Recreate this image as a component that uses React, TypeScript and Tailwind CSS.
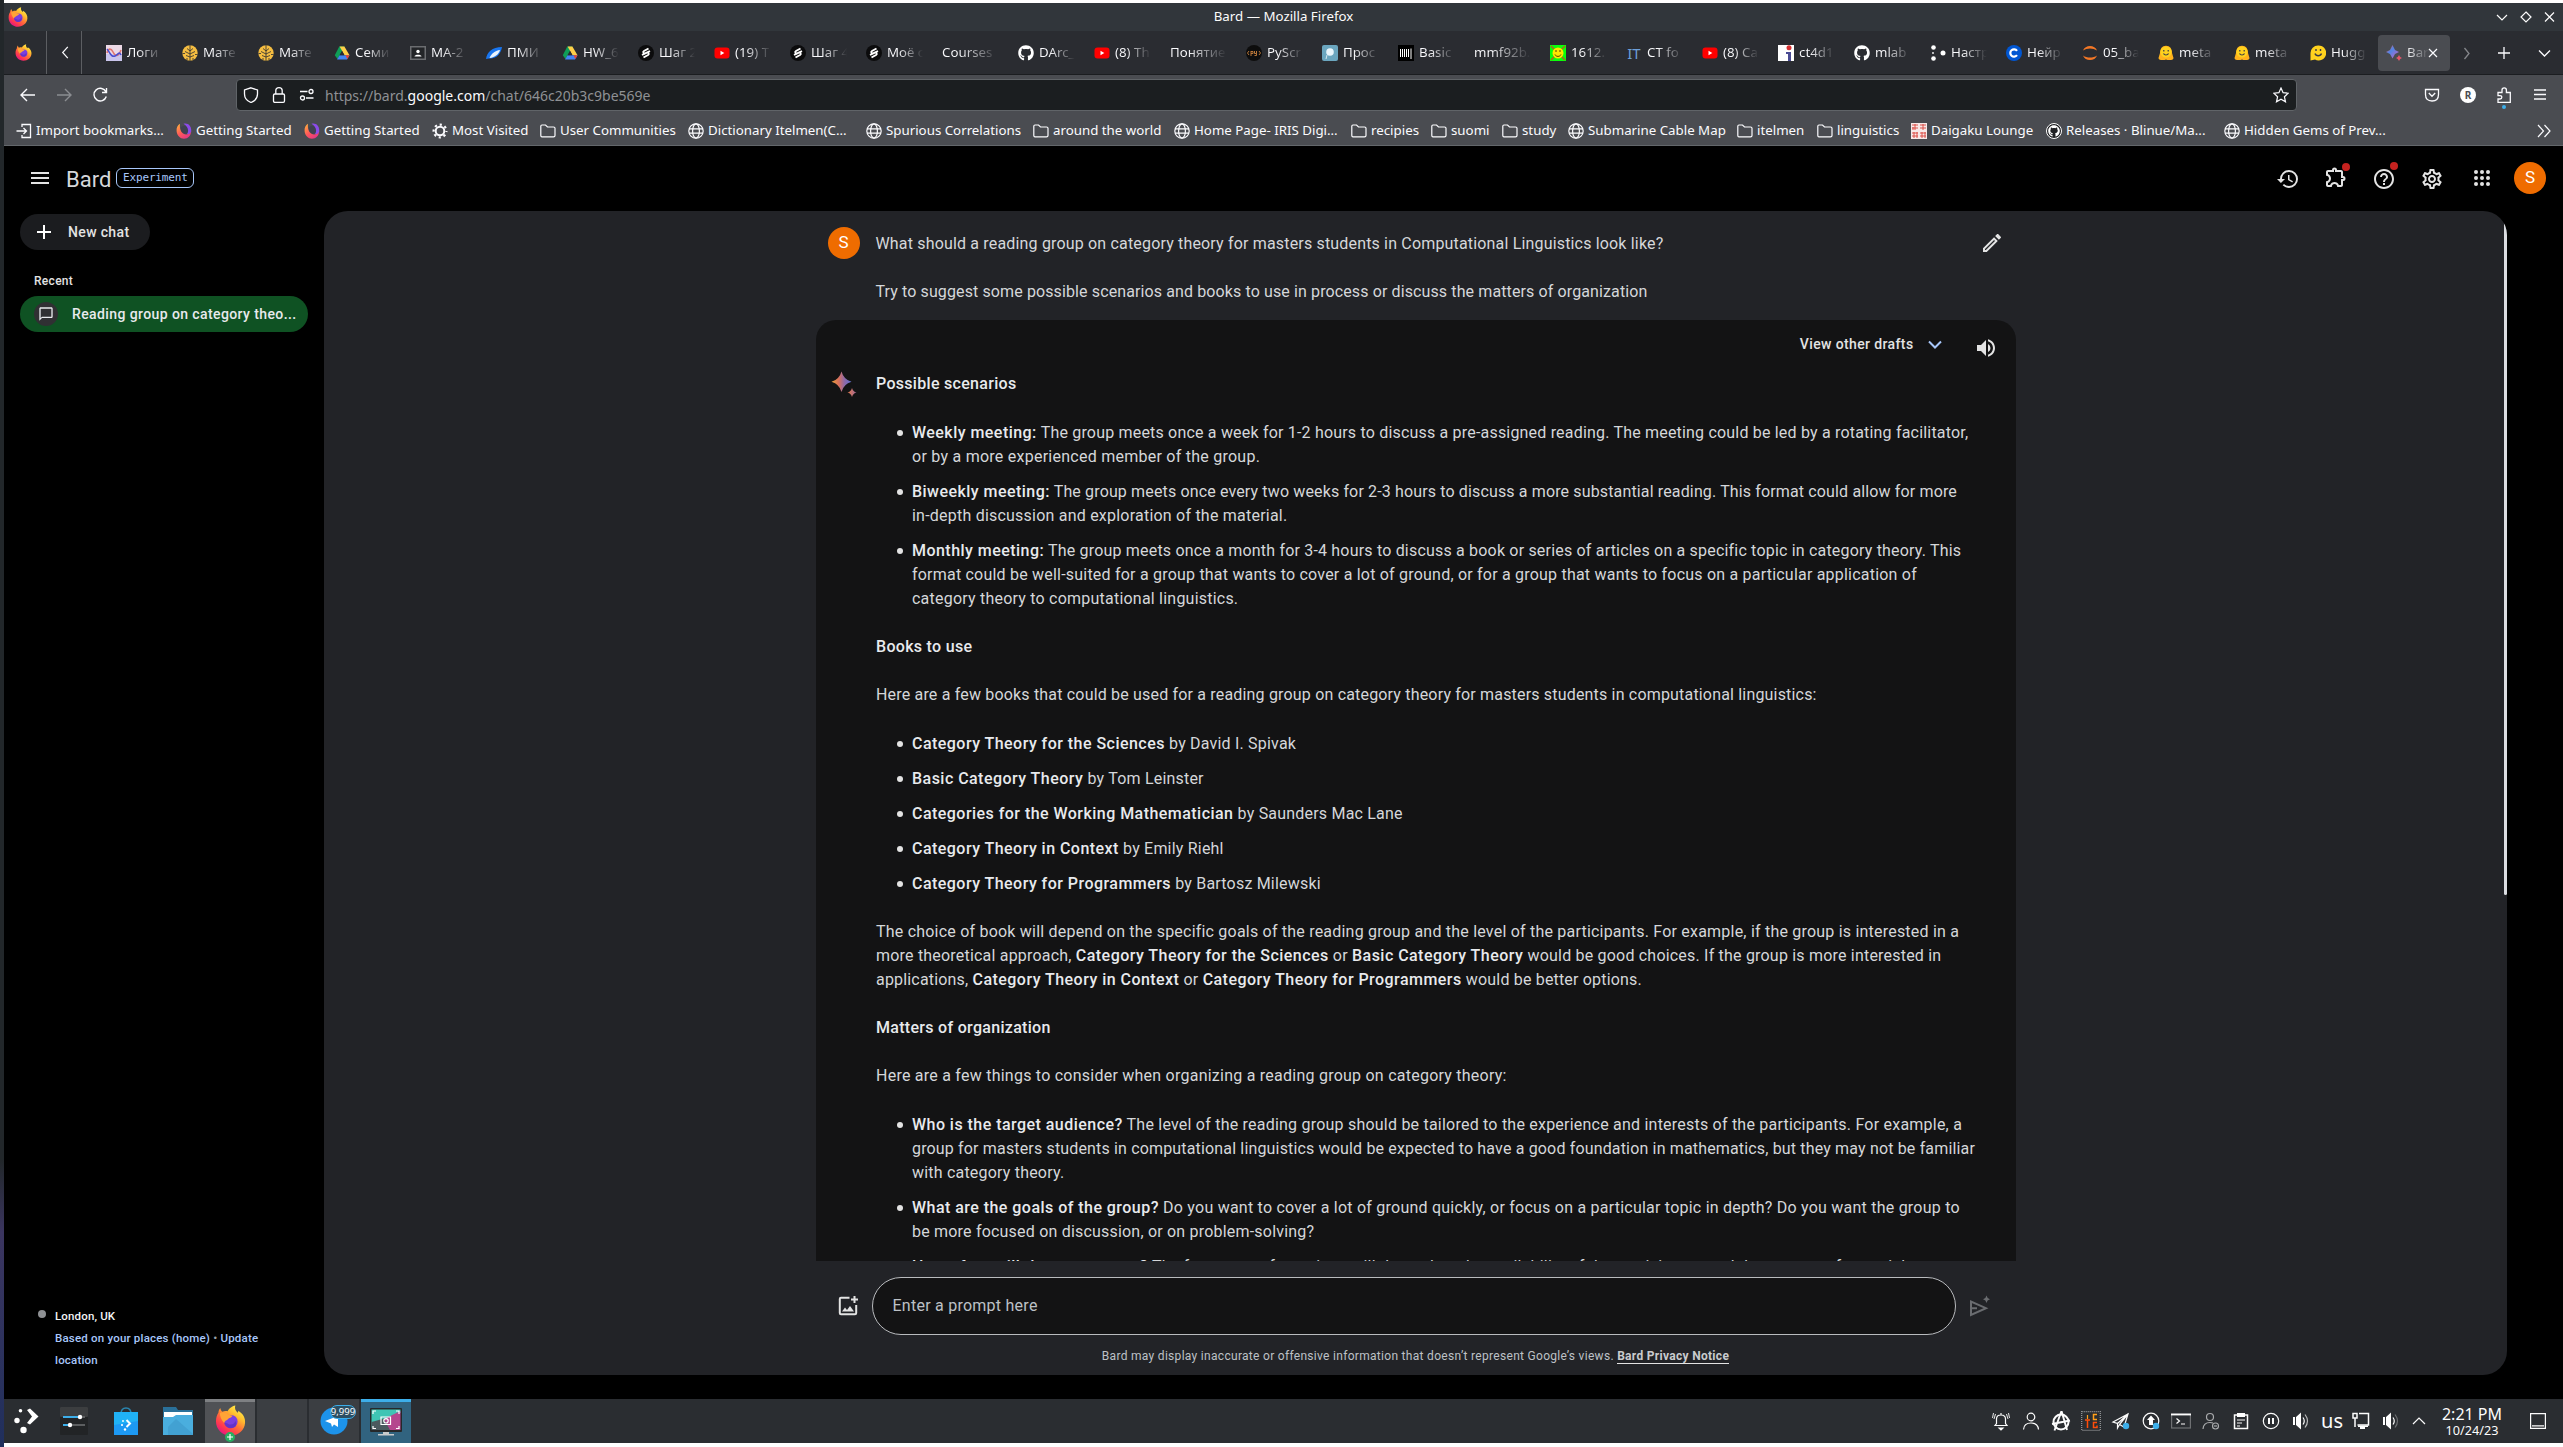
import React from "react";
import {
  MdHistory,
  MdOutlineExtension,
  MdHelpOutline,
  MdOutlineSettings,
  MdVolumeUp,
  MdOutlineEdit,
  MdChatBubbleOutline,
} from "react-icons/md";
import { FaGithub } from "react-icons/fa";

/* ---------- small drawings ---------- */

function Firefox({ className }: { className: string }) {
  const id = React.useId();
  return (
    <svg viewBox="0 0 32 32" className={className}>
      <defs>
        <linearGradient id={id + "a"} x1="0.85" y1="0.05" x2="0.2" y2="0.95">
          <stop offset="0" stopColor="#fff44f" />
          <stop offset="0.3" stopColor="#ffbd2e" />
          <stop offset="0.55" stopColor="#ff7139" />
          <stop offset="0.8" stopColor="#ff3750" />
          <stop offset="1" stopColor="#e31587" />
        </linearGradient>
      </defs>
      <path
        fill={`url(#${id}a)`}
        d="M21 0.500C20 4 21.500 6 23.500 8C24 7.500 24 6 24 6C29 9 31.500 13.500 31 18.500C30.500 26 24 31.500 16 31.500C7.500 31.500 1 25 1 17C1 13 2 10 3.500 8C3.500 6 4.500 4 5.500 3C5.500 4.500 6.500 6 7.500 7C9.500 6 11.500 6 13 6.500C14 4 17.500 1 21 0.500Z"
      />
      <circle cx="16.500" cy="17" r="6.800" fill="#7a3fe0" />
      <path fill="#ffa436" d="M5 8.500C8 6.500 12 7.500 13.500 10C15 10.500 17 10.500 18 11C17 13.500 14.500 13 13.500 14.500C12.500 16 10 16 9.500 18.500C7 16 5 12 5 8.500Z" />
      <path fill="#5a2fc0" d="M13 19C16 21.500 20 20 21 16.500C23.500 20 21 24 16.500 24C12 24 9.500 20.500 9.600 18Z" opacity="0.7" />
    </svg>
  );
}

function Swirl() {
  const id = React.useId();
  return (
    <svg viewBox="0 0 16 16" className="size-4 shrink-0">
      <defs>
        <linearGradient id={id} x1="0.1" y1="0" x2="0.8" y2="1">
          <stop offset="0" stopColor="#ffb13d" />
          <stop offset="0.5" stopColor="#ff5a58" />
          <stop offset="1" stopColor="#e0308c" />
        </linearGradient>
      </defs>
      <circle cx="8.600" cy="6.800" r="4" fill="#3f4150" />
      <path fill={`url(#${id})`} d="M4 0.800C1.500 2 0.300 5 0.600 8.200C1 12.500 4.200 15.700 8 15.700C12 15.700 15.200 12.500 15.200 8C13.800 11 10.500 12 8 11C4.500 9.500 3.500 5 4 0.800Z" />
      <path fill="#8b4be8" d="M7.500 0.800C12 -0.500 15.600 3 15.200 8.200C14.500 10.500 12.500 11.400 11 11C13.300 8 12 3.500 7.500 0.800Z" />
    </svg>
  );
}

function Sparkle({ className }: { className: string }) {
  const id = React.useId();
  return (
    <svg viewBox="0 0 28 28" className={className}>
      <defs>
        <linearGradient id={id} x1="0" y1="0.500" x2="1" y2="0.500">
          <stop offset="0" stopColor="#e8a13a" />
          <stop offset="0.35" stopColor="#d9705a" />
          <stop offset="0.65" stopColor="#8e6aa8" />
          <stop offset="1" stopColor="#5f6fd0" />
        </linearGradient>
        <linearGradient id={id + "b"} x1="0" y1="0.500" x2="1" y2="0.500">
          <stop offset="0" stopColor="#e27a4a" />
          <stop offset="1" stopColor="#a0689a" />
        </linearGradient>
      </defs>
      <path fill={`url(#${id})`} d="M11.500 0.500Q13.700 8.500 21.500 10.800Q13.700 13 11.500 21Q9.300 13 1.500 10.800Q9.300 8.500 11.500 0.500Z" />
      <path fill={`url(#${id}b)`} d="M22 17Q23.200 20.800 26.500 21.500Q23.200 22.300 22 26Q20.800 22.300 17.500 21.500Q20.800 20.800 22 17Z" />
    </svg>
  );
}

function TabSparkle() {
  return (
    <svg viewBox="0 0 16 16" className="size-4 shrink-0">
      <defs>
        <linearGradient id="tsp" x1="0" y1="0" x2="1" y2="1">
          <stop offset="0.100" stopColor="#e8576a" />
          <stop offset="0.400" stopColor="#4f86e8" />
          <stop offset="0.750" stopColor="#9a6fd0" />
        </linearGradient>
      </defs>
      <path fill="url(#tsp)" d="M6.500 0L9 5L13 7L9 9L6.500 13.500L4 9L0 7L4 5Z" />
      <path fill="#e5566b" d="M13 10l1.200 2L16 13l-1.800 1L13 16l-1.200-2L10 13l1.800-1Z" />
    </svg>
  );
}

type IconKind =
  | "wave" | "brain" | "drive" | "class" | "feather" | "stepik" | "yt" | "gh" | "py" | "proc"
  | "ncat" | "smile" | "it" | "ct" | "dots" | "c" | "jup" | "hug" | "hugc" | "bard" | "none";

function TabIcon({ kind }: { kind: IconKind }) {
  switch (kind) {
    case "wave":
      return (
        <svg viewBox="0 0 16 16" className="size-4">
          <rect width="16" height="16" fill="#ecd9e6" />
          <rect y="9" width="16" height="7" fill="#c9c5ec" />
          <path d="M1 8C2 3 5 3 7 7S12 13 15 5" fill="none" stroke="#e0766f" strokeWidth="1.600" />
          <path d="M1 4C4 7 5 13 9 11S13 6 15 10" fill="none" stroke="#4a4fd0" strokeWidth="1.600" />
        </svg>
      );
    case "brain":
      return (
        <svg viewBox="0 0 16 16" className="size-4">
          <circle cx="8" cy="8" r="7.700" fill="#f5bd41" />
          <path d="M8 0V16M8 6L5 3.500M8 9L3 6.500M8 12L4 10.500M8 6L11 3.500M8 9L13 6.500M8 12L12 10.500M0.500 8.500H3M13 9.500H15.500M5 13V15M11 13V15" stroke="#2a2c31" strokeWidth="0.800" fill="none" />
        </svg>
      );
    case "drive":
      return (
        <svg viewBox="0 0 16 16" className="size-4">
          <path fill="#0f9d58" d="M5.300 1.500L10.500 1.500L3.500 14L0.800 10.200Z" />
          <path fill="#ffcf48" d="M5.600 1.500H10.400L15.500 10.200H10.600Z" />
          <path fill="#4285f4" d="M5.500 10.200H15.500L13 14.500H3Z" />
          <path fill="#ea4335" d="M11.500 10.200H15.500L13.300 14Z" />
          <path fill="#2a2c31" d="M8 6L10.400 10.200H5.600Z" />
        </svg>
      );
    case "class":
      return (
        <svg viewBox="0 0 16 16" className="size-4">
          <rect x="0" y="1" width="16" height="14" fill="#6b6d70" />
          <rect x="1.500" y="2.500" width="13" height="11" fill="#232528" />
          <circle cx="8" cy="6.500" r="1.700" fill="#fff" />
          <path fill="#fff" d="M4.500 11.500c0-2.400 7-2.400 7 0Z" />
        </svg>
      );
    case "feather":
      return (
        <svg viewBox="0 0 16 16" className="size-4">
          <path fill="#1976f0" d="M0 14C1 7 6 2 16 2C15 8 11 14 3 13.500Z" />
          <path fill="#e9f4ff" d="M3.500 13C5 9 9 5.500 14 5C13 9 9 12.500 3.500 13Z" />
        </svg>
      );
    case "stepik":
      return (
        <svg viewBox="0 0 16 16" className="size-4">
          <circle cx="8" cy="8" r="8" fill="#0b0b0c" />
          <path d="M10.500 3.500L6 6C4.500 7 5.500 9 7.200 8.300L12 6M5.500 12.500L10 10C11.500 9 10.500 7 8.800 7.700L4 10" fill="none" stroke="#fff" strokeWidth="1.900" />
        </svg>
      );
    case "yt":
      return (
        <svg viewBox="0 0 16 16" className="size-4">
          <rect x="0.500" y="2.500" width="15" height="11" rx="3" fill="#f00" />
          <path fill="#fff" d="M6.500 5.800L10.300 8L6.500 10.200Z" />
        </svg>
      );
    case "gh":
      return <FaGithub className="size-4 text-white" />;
    case "py":
      return (
        <svg viewBox="0 0 16 16" className="size-4">
          <circle cx="8" cy="8" r="8" fill="#0d0d0d" />
          <path d="M3 6L1.500 8L3 10M13 6L14.500 8L13 10M5 6V11M5 6.500H7V8.500H5M8.500 6V8.500H10.500V6M10.500 8.500V10.500H8.500" stroke="#c9803c" strokeWidth="0.900" fill="none" />
        </svg>
      );
    case "proc":
      return (
        <svg viewBox="0 0 16 16" className="size-4">
          <rect width="16" height="16" rx="2" fill="#6ba6bf" />
          <circle cx="8" cy="7" r="3.800" fill="#e9f5fb" />
          <path d="M5 10L4 14" stroke="#d5eaf2" strokeWidth="1" />
        </svg>
      );
    case "ncat":
      return (
        <svg viewBox="0 0 16 16" className="size-4">
          <rect width="16" height="16" fill="#000" />
          <path d="M2.500 4V12M4.500 4V12M6.500 4V12M8.500 4V12M10.500 4V12M13 3.500V14" stroke="#fff" strokeWidth="1" />
        </svg>
      );
    case "smile":
      return (
        <svg viewBox="0 0 16 16" className="size-4">
          <rect width="16" height="16" fill="#0aff0a" />
          <path d="M1 1L15 15M15 1L1 15" stroke="#b0651e" strokeWidth="1.500" />
          <circle cx="8" cy="8" r="5.500" fill="#ffe600" />
          <path d="M6 5V7M10 5V7M5 9.500C6 12 10 12 11 9.500" stroke="#5a3a00" strokeWidth="1" fill="none" />
        </svg>
      );
    case "it":
      return <span className="text-[15px] leading-4 text-[#6d9fd8]">IT</span>;
    case "ct":
      return (
        <svg viewBox="0 0 16 16" className="size-4">
          <rect width="16" height="16" fill="#fff" />
          <circle cx="11" cy="2.800" r="2.500" fill="#d63031" />
          <path fill="#4a4b94" d="M8 7H13V16H10V9H8Z" />
        </svg>
      );
    case "dots":
      return (
        <svg viewBox="0 0 16 16" className="size-4" fill="#fff">
          <circle cx="3.500" cy="2.500" r="2.300" />
          <circle cx="3.500" cy="13.500" r="2.300" />
          <circle cx="13" cy="8" r="2.500" />
          <circle cx="3" cy="8" r="0.900" />
        </svg>
      );
    case "c":
      return (
        <svg viewBox="0 0 16 16" className="size-4">
          <circle cx="8" cy="8" r="8" fill="#0056d2" />
          <path d="M11 5.800A3.700 3.700 0 1 0 11 10.200" fill="none" stroke="#fff" strokeWidth="2.200" />
        </svg>
      );
    case "jup":
      return (
        <svg viewBox="0 0 16 16" className="size-4">
          <path fill="#f37726" d="M1 5.500C3 -0.500 13 -0.500 15 5.500C11 2.800 5 2.800 1 5.500ZM1 10.500C5 13.200 11 13.200 15 10.500C13 16.500 3 16.500 1 10.500Z" />
        </svg>
      );
    case "hug":
      return (
        <svg viewBox="0 0 16 16" className="size-4">
          <path fill="#ffb21d" d="M8 0.800C12 0.800 14 4 14 8L15.500 13C15.500 15.500 10 15.500 8 14.500C6 15.500 0.500 15.500 0.500 13L2 8C2 4 4 0.800 8 0.800Z" />
          <circle cx="8" cy="7" r="5.600" fill="#ffd21e" />
          <path d="M5.800 5V6.500M10.200 5V6.500M5.500 8.500C6.500 10.500 9.500 10.500 10.500 8.500" stroke="#3a3b45" strokeWidth="1.200" fill="none" />
        </svg>
      );
    case "hugc":
      return (
        <svg viewBox="0 0 16 16" className="size-4">
          <path fill="#ffd21e" d="M8 0.500A7.500 7.500 0 1 1 5 14.500L0.500 15.500V8A7.500 7.500 0 0 1 8 0.500Z" />
          <path d="M6 4V6M10.500 4V6M5 8.500C6 11.500 10.500 11.500 11.500 8.500" stroke="#3a3b45" strokeWidth="1.400" fill="none" />
        </svg>
      );
    case "bard":
      return <TabSparkle />;
    default:
      return null;
  }
}

/* ---------- data ---------- */

const tabs: { icon: IconKind; label: string }[] = [
  { icon: "wave", label: "Логи" },
  { icon: "brain", label: "Мате" },
  { icon: "brain", label: "Мате" },
  { icon: "drive", label: "Семи" },
  { icon: "class", label: "МА-2" },
  { icon: "feather", label: "ПМИ" },
  { icon: "drive", label: "HW_6" },
  { icon: "stepik", label: "Шаг 2" },
  { icon: "yt", label: "(19) Т" },
  { icon: "stepik", label: "Шаг 4" },
  { icon: "stepik", label: "Моё о" },
  { icon: "none", label: "Courses" },
  { icon: "gh", label: "DArc_" },
  { icon: "yt", label: "(8) Th" },
  { icon: "none", label: "Понятие" },
  { icon: "py", label: "PyScr" },
  { icon: "proc", label: "Прос" },
  { icon: "ncat", label: "Basic" },
  { icon: "none", label: "mmf92b." },
  { icon: "smile", label: "1612." },
  { icon: "it", label: "CT fo" },
  { icon: "yt", label: "(8) Ca" },
  { icon: "ct", label: "ct4d1" },
  { icon: "gh", label: "mlab" },
  { icon: "dots", label: "Настр" },
  { icon: "c", label: "Нейр" },
  { icon: "jup", label: "05_ba" },
  { icon: "hug", label: "meta" },
  { icon: "hug", label: "meta" },
  { icon: "hugc", label: "Hugg" },
];

const bookmarks: { icon: string; label: string; w: string }[] = [
  { icon: "import", label: "Import bookmarks...", w: "w-[160px]" },
  { icon: "swirl", label: "Getting Started", w: "w-[128px]" },
  { icon: "swirl", label: "Getting Started", w: "w-[128px]" },
  { icon: "gear", label: "Most Visited", w: "w-[108px]" },
  { icon: "folder", label: "User Communities", w: "w-[148px]" },
  { icon: "globe", label: "Dictionary Itelmen(C...", w: "w-[178px]" },
  { icon: "globe", label: "Spurious Correlations", w: "w-[167px]" },
  { icon: "folder", label: "around the world", w: "w-[141px]" },
  { icon: "globe", label: "Home Page- IRIS Digi...", w: "w-[177px]" },
  { icon: "folder", label: "recipies", w: "w-[80px]" },
  { icon: "folder", label: "suomi", w: "w-[71px]" },
  { icon: "folder", label: "study", w: "w-[66px]" },
  { icon: "globe", label: "Submarine Cable Map", w: "w-[169px]" },
  { icon: "folder", label: "itelmen", w: "w-[80px]" },
  { icon: "folder", label: "linguistics", w: "w-[94px]" },
  { icon: "daigaku", label: "Daigaku Lounge", w: "w-[135px]" },
  { icon: "gh", label: "Releases · Blinue/Ma...", w: "w-[178px]" },
  { icon: "globe", label: "Hidden Gems of Prev...", w: "w-[180px]" },
];

function BookmarkIcon({ kind }: { kind: string }) {
  const s = "size-4 shrink-0";
  if (kind === "swirl") return <Swirl />;
  if (kind === "import")
    return (
      <svg viewBox="0 0 16 16" className={s} fill="none" stroke="#fbfbfe" strokeWidth="1.300">
        <path d="M6 4V1.500H14.500V14.500H6V12M0.500 8H10M7.500 5L10.500 8L7.500 11" />
      </svg>
    );
  if (kind === "gear")
    return (
      <svg viewBox="0 0 16 16" className={s} fill="none" stroke="#fbfbfe">
        <circle cx="8" cy="8" r="4.300" strokeWidth="2" />
        <circle cx="8" cy="8" r="6.400" strokeWidth="2.200" strokeDasharray="2.200 2.826" strokeDashoffset="1.100" />
      </svg>
    );
  if (kind === "folder")
    return (
      <svg viewBox="0 0 16 16" className={s} fill="none" stroke="#fbfbfe" strokeWidth="1.200">
        <path d="M0.800 12.500V3.300Q0.800 2 2 2H5.500L7.500 4H13.500Q15 4 15 5.300V12.500Q15 13.800 13.500 13.800H2Q0.800 13.800 0.800 12.500Z" />
      </svg>
    );
  if (kind === "globe")
    return (
      <svg viewBox="0 0 16 16" className={s} fill="none" stroke="#fbfbfe" strokeWidth="1.200">
        <circle cx="8" cy="8" r="7.200" />
        <ellipse cx="8" cy="8" rx="3.400" ry="7.200" />
        <path d="M1 5.800H15M1 10.200H15" />
      </svg>
    );
  if (kind === "daigaku")
    return (
      <svg viewBox="0 0 16 16" className={s}>
        <rect width="16" height="16" fill="#f7e9e8" />
        <path d="M1 2H7M1 5H7M4 1V7M2 7V4M9 2H15M9 5H15M12 1V7M1 10H7M1 13H7M3 9V15M6 9V15M9 10H15M9 13H15M11 9V15M14 9V15" stroke="#d9433c" strokeWidth="0.900" />
      </svg>
    );
  return (
    <span className="flex size-4 shrink-0 items-center justify-center rounded-full border border-white bg-[#202124]">
      <FaGithub className="size-3 text-white" />
    </span>
  );
}

/* ---------- browser chrome ---------- */

function TitleBar() {
  return (
    <div className="flex h-7 items-center bg-[#31363b] pr-1 pl-1">
      <Firefox className="size-5" />
      <div className="flex-1 pl-[46px] text-center text-[13.3px] text-[#fcfcfc]">Bard — Mozilla Firefox</div>
      <svg viewBox="0 0 66 14" className="h-[14px] w-[66px]" fill="none" stroke="#fcfcfc" strokeWidth="1.200">
        <path d="M4 5L9 10L14 5" />
        <path d="M33 2L38 7L33 12L28 7Z" />
        <path d="M52 2.500L61 11.500M61 2.500L52 11.500" />
      </svg>
    </div>
  );
}

function TabBar() {
  return (
    <div className="flex h-11 items-center border-b border-[#1b1d20] bg-[#2a2c31]">
      <div className="flex h-full w-[43px] items-center border-r border-[#5c5e62] pl-[11px]">
        <Firefox className="size-[17px]" />
      </div>
      <div className="flex h-full w-[35px] items-center justify-center border-r border-[#5c5e62]">
        <svg viewBox="0 0 8 14" className="ml-px h-[13px] w-2" fill="none" stroke="#fbfbfe" strokeWidth="1.300">
          <path d="M7 1L1.500 7L7 13" />
        </svg>
      </div>
      <div className="flex items-center pl-[14px]">
        {tabs.map((t, i) => (
          <div key={i} className="flex h-9 w-[76px] items-center gap-[5px] pr-[9px] pl-[10px]">
            {t.icon !== "none" && (
              <span className="flex size-4 shrink-0 items-center justify-center">
                <TabIcon kind={t.icon} />
              </span>
            )}
            <span className="min-w-0 flex-1 bg-linear-to-r from-[#fbfbfe] from-30% to-transparent bg-clip-text text-[13.3px] whitespace-nowrap text-transparent">
              {t.label}
            </span>
          </div>
        ))}
        <div className="ml-0.5 flex h-9 w-[72px] items-center gap-[5px] rounded bg-[#4a4c51] pl-2">
          <TabIcon kind="bard" />
          <span className="w-[22px] bg-linear-to-r from-[#fbfbfe] to-transparent bg-clip-text text-[13.3px] whitespace-nowrap text-transparent">
            Bar
          </span>
          <svg viewBox="0 0 10 10" className="-ml-1.5 size-[10px]" stroke="#fbfbfe" strokeWidth="1.200">
            <path d="M1 1L9 9M9 1L1 9" />
          </svg>
        </div>
      </div>
      <svg viewBox="0 0 100 16" className="ml-[13px] h-4 w-[100px]" fill="none" stroke="#fbfbfe" strokeWidth="1.300">
        <path d="M1.500 3L6 8.500L1.500 14" stroke="#85878b" />
        <path d="M35 8H47M41 2V14" />
        <path d="M76 5.500L81.500 11L87 5.500" />
      </svg>
    </div>
  );
}

function NavBar() {
  return (
    <div className="flex h-10 items-center">
      <svg viewBox="0 0 100 16" className="ml-4 h-4 w-[100px]" fill="none" stroke="#fbfbfe" strokeWidth="1.400">
        <path d="M15 8H1M7 2L1 8L7 14" />
        <path d="M37 8H51M45 2L51 8L45 14" stroke="#8b8d91" />
        <path d="M86 5A6.300 6.300 0 1 0 86.300 9.500M86.500 1V5.500H82" />
      </svg>
      <div className="ml-[116px] flex h-8 w-[2061px] items-center rounded border border-[#606468] bg-[#1b1e20] pl-1.5">
        <svg viewBox="0 0 16 16" className="size-4" fill="none" stroke="#fbfbfe" strokeWidth="1.300">
          <path d="M8 0.800L14.500 3V7C14.500 11 12 14 8 15.500C4 14 1.500 11 1.500 7V3Z" />
        </svg>
        <svg viewBox="0 0 16 16" className="ml-3 size-4" fill="none" stroke="#fbfbfe" strokeWidth="1.300">
          <rect x="2.500" y="7" width="11" height="8.300" rx="1.300" />
          <path d="M4.800 7V3.600Q4.800 0.700 8 0.700T11.200 3.600V7" />
        </svg>
        <svg viewBox="0 0 16 16" className="ml-3 size-4" fill="none" stroke="#fbfbfe" strokeWidth="1.300">
          <circle cx="12" cy="4.500" r="2" />
          <circle cx="3.500" cy="11" r="2" />
          <path d="M1 4.500H8.500M7 11H14.500" />
        </svg>
        <span className="ml-2.5 flex-1 text-[14px] text-[#8f9194]">
          https://bard.<span className="text-[#fbfbfe]">google.com</span>/chat/646c20b3c9be569e
        </span>
        <svg viewBox="0 0 16 16" className="mr-[7px] size-4" fill="none" stroke="#fbfbfe" strokeWidth="1.200">
          <path d="M8 1L10.100 5.700L15.200 6.200L11.400 9.700L12.500 14.800L8 12.200L3.500 14.800L4.600 9.700L0.800 6.200L5.900 5.700Z" />
        </svg>
      </div>
      <svg viewBox="0 0 16 16" className="ml-[127px] size-4" fill="none" stroke="#fbfbfe" strokeWidth="1.300">
        <path d="M1.500 2.500H14.500V7.500Q14.500 14 8 14T1.500 7.500ZM4.800 6L8 9.300L11.200 6" />
      </svg>
      <span className="ml-5 flex size-4 items-center justify-center rounded-full bg-white text-[10px] font-bold text-[#4a4c51]">R</span>
      <div className="relative ml-5 size-4">
        <svg viewBox="0 0 16 16" className="size-4" fill="none" stroke="#fbfbfe" strokeWidth="1.300">
          <path d="M2 5.500H6V3Q6 0.800 8.200 0.800T10.400 3V5.500H14.300V15.300H2V12H4Q5.800 12 5.800 10.300T4 8.600H2Z" />
        </svg>
        <span className="absolute top-[18px] left-1.5 size-1 rounded-full bg-[#3daee9]" />
      </div>
      <svg viewBox="0 0 16 16" className="ml-5 size-4" stroke="#fbfbfe" strokeWidth="1.300">
        <path d="M2 3H14M2 7.500H14M2 12H14" />
      </svg>
    </div>
  );
}

function BookmarksBar() {
  return (
    <div className="flex h-[30px] items-center pt-px pl-3">
      {bookmarks.map((b, i) => (
        <div key={i} className={`flex shrink-0 items-center gap-1 text-[13.3px] whitespace-nowrap text-[#fbfbfe] ${b.w}`}>
          <BookmarkIcon kind={b.icon} />
          <span>{b.label}</span>
        </div>
      ))}
      <svg viewBox="0 0 14 14" className="mr-[12px] ml-auto size-[14px]" fill="none" stroke="#fbfbfe" strokeWidth="1.200">
        <path d="M1 1L6.500 7L1 13M7.500 1L13 7L7.500 13" />
      </svg>
    </div>
  );
}

/* ---------- Bard page ---------- */

function Avatar() {
  return (
    <span className="flex size-8 shrink-0 items-center justify-center rounded-full bg-[#ef6c00] text-[17px] text-white">S</span>
  );
}

function BardHeader() {
  return (
    <div className="flex h-16 items-center pr-[17px] pl-[27px]">
      <svg viewBox="0 0 18 12" className="h-3 w-[18px]" fill="#e3e3e3">
        <path d="M0 0H18V2H0ZM0 5H18V7H0ZM0 10H18V12H0Z" />
      </svg>
      <span className="mt-0.5 ml-[17px] text-[22px] text-[#d5d7da]">Bard</span>
      <span className="ml-[5px] flex h-5 w-[78px] items-center justify-center rounded-md border border-[#a8c7fa] font-['DejaVu_Sans_Mono',monospace] text-[11px] tracking-[-0.17px] text-[#a8c7fa]">
        Experiment
      </span>
      <div className="ml-auto flex items-center gap-6 text-[#e3e3e3]">
        <MdHistory className="mt-0.5 size-6" />
        <div className="relative -mt-0.5">
          <MdOutlineExtension className="size-6" />
          <span className="absolute -top-[2px] left-[18px] size-2 rounded-full bg-[#c5221f]" />
        </div>
        <div className="relative mt-0.5">
          <MdHelpOutline className="size-6" />
          <span className="absolute -top-[5px] left-[18px] size-2 rounded-full bg-[#c5221f]" />
        </div>
        <MdOutlineSettings className="mt-0.5 size-6" />
      </div>
      <svg viewBox="0 0 16 16" className="ml-[30px] size-4" fill="#e3e3e3">
        {[2, 8, 14].map((x) => [2, 8, 14].map((y) => <circle key={`${x}-${y}`} cx={x} cy={y} r="2" />))}
      </svg>
      <div className="ml-6">
        <Avatar />
      </div>
    </div>
  );
}

function Sidebar() {
  return (
    <div className="flex w-80 shrink-0 flex-col pl-4 font-medium">
      <div className="mt-[3px] flex h-9 w-[130px] items-center rounded-full bg-[#1b1c1f] pl-[17px] text-sm text-[#e3e3e3]">
        <svg viewBox="0 0 14 14" className="size-[14px]" stroke="#fff" strokeWidth="2">
          <path d="M0 7H14M7 0V14" />
        </svg>
        <span className="ml-[17px] tracking-[0.35px]">New chat</span>
      </div>
      <div className="mt-[22px] ml-[14px] h-[18px] text-xs leading-[18px] tracking-[0.3px] text-[#e3e3e3]">Recent</div>
      <div className="mt-1.5 flex h-9 w-72 items-center rounded-full bg-[#0f5223] pl-[14px] text-sm text-[#e8eaed]">
        <span className="flex size-6 items-center justify-center rounded-full bg-[#303033]">
          <MdChatBubbleOutline className="size-4" />
        </span>
        <span className="ml-[14px] tracking-[0.4px] whitespace-nowrap">Reading group on category theo...</span>
      </div>
      <div className="mt-auto mb-1 flex pl-[18px] text-[11.500px] leading-[22px] text-[#a8c7fa]">
        <span className="mt-[5px] mr-[9px] size-2 shrink-0 rounded-full bg-[#8f9194]" />
        <div className="whitespace-nowrap">
          <div className="tracking-[0.15px] text-[#f1f3f4]">London, UK</div>
          <div className="tracking-[0.2px]">
            Based on your places (home) <span className="text-[#9aa0a6]">•</span> Update
          </div>
          <div className="tracking-[0.2px]">location</div>
        </div>
      </div>
    </div>
  );
}

const B = ({ children }: { children: React.ReactNode }) => (
  <b className="font-medium tracking-[0.46px] text-[#e8eaed]">{children}</b>
);

const Heading = ({ children, className = "mt-6" }: { children: React.ReactNode; className?: string }) => (
  <p className={`font-medium tracking-[0.3px] text-[#e8eaed] ${className}`}>{children}</p>
);

/* One visual line of body copy. */
const Ln = ({ children, t = "tracking-[0.2px]" }: { children: React.ReactNode; t?: string }) => (
  <span className={`block ${t}`}>{children}</span>
);

function Item({ children }: { children: React.ReactNode }) {
  return (
    <li className="flex">
      <span className="mt-[9px] mr-[9px] size-[6px] shrink-0 rounded-full bg-[#e3e3e3]" />
      <div>{children}</div>
    </li>
  );
}

function Bullets({ children }: { children: React.ReactNode }) {
  return <ul className="mt-[25px] flex flex-col gap-[11px] pl-[21px]">{children}</ul>;
}

function Answer() {
  return (
    <div className="h-[941px] overflow-hidden rounded-t-[20px] bg-[#131314]">
      <div className="flex h-[51px] items-start justify-end pr-[18px]">
        <span className="mt-3 text-sm leading-6 font-medium tracking-[0.38px] text-[#e3e3e3]">View other drafts</span>
        <svg viewBox="0 0 14 10" className="mt-5 ml-[14px] h-[10px] w-[14px]" fill="none" stroke="#a8c7fa" strokeWidth="2">
          <path d="M1 1.500L7 7.500L13 1.500" />
        </svg>
        <MdVolumeUp className="mt-4 ml-[32px] size-6 text-[#e3e3e3]" />
      </div>
      <div className="flex pl-[14px]">
        <Sparkle className="size-7 shrink-0" />
        <div className="ml-[18.500px] pt-px leading-6 whitespace-nowrap">
          <Heading className="">Possible scenarios</Heading>
          <Bullets>
            <Item>
              <Ln t="tracking-[0.19px]"><B>Weekly meeting:</B> The group meets once a week for 1-2 hours to discuss a pre-assigned reading. The meeting could be led by a rotating facilitator,</Ln>
              <Ln t="tracking-[0.25px]">or by a more experienced member of the group.</Ln>
            </Item>
            <Item>
              <Ln t="tracking-[0.14px]"><B>Biweekly meeting:</B> The group meets once every two weeks for 2-3 hours to discuss a more substantial reading. This format could allow for more</Ln>
              <Ln t="tracking-[0.22px]">in-depth discussion and exploration of the material.</Ln>
            </Item>
            <Item>
              <Ln t="tracking-[0.19px]"><B>Monthly meeting:</B> The group meets once a month for 3-4 hours to discuss a book or series of articles on a specific topic in category theory. This</Ln>
              <Ln t="tracking-[0.21px]">format could be well-suited for a group that wants to cover a lot of ground, or for a group that wants to focus on a particular application of</Ln>
              <Ln t="tracking-[0.22px]">category theory to computational linguistics.</Ln>
            </Item>
          </Bullets>
          <Heading>Books to use</Heading>
          <p className="mt-6">
            <Ln t="tracking-[0.18px]">Here are a few books that could be used for a reading group on category theory for masters students in computational linguistics:</Ln>
          </p>
          <Bullets>
            <Item><Ln><B>Category Theory for the Sciences</B> by David I. Spivak</Ln></Item>
            <Item><Ln><B>Basic Category Theory</B> by Tom Leinster</Ln></Item>
            <Item><Ln><B>Categories for the Working Mathematician</B> by Saunders Mac Lane</Ln></Item>
            <Item><Ln><B>Category Theory in Context</B> by Emily Riehl</Ln></Item>
            <Item><Ln><B>Category Theory for Programmers</B> by Bartosz Milewski</Ln></Item>
          </Bullets>
          <p className="mt-6">
            <Ln t="tracking-[0.21px]">The choice of book will depend on the specific goals of the reading group and the level of the participants. For example, if the group is interested in a</Ln>
            <Ln>more theoretical approach, <B>Category Theory for the Sciences</B> or <B>Basic Category Theory</B> would be good choices. If the group is more interested in</Ln>
            <Ln t="tracking-[0.18px]">applications, <B>Category Theory in Context</B> or <B>Category Theory for Programmers</B> would be better options.</Ln>
          </p>
          <Heading>Matters of organization</Heading>
          <p className="mt-6">
            <Ln t="tracking-[0.24px]">Here are a few things to consider when organizing a reading group on category theory:</Ln>
          </p>
          <Bullets>
            <Item>
              <Ln t="tracking-[0.22px]"><B>Who is the target audience?</B> The level of the reading group should be tailored to the experience and interests of the participants. For example, a</Ln>
              <Ln t="tracking-[0.16px]">group for masters students in computational linguistics would be expected to have a good foundation in mathematics, but they may not be familiar</Ln>
              <Ln>with category theory.</Ln>
            </Item>
            <Item>
              <Ln t="tracking-[0.23px]"><B>What are the goals of the group?</B> Do you want to cover a lot of ground quickly, or focus on a particular topic in depth? Do you want the group to</Ln>
              <Ln>be more focused on discussion, or on problem-solving?</Ln>
            </Item>
            <Item>
              <Ln><B>How often will the group meet?</B> The frequency of meetings will depend on the availability of the participants and the amount of material you want</Ln>
            </Item>
          </Bullets>
        </div>
      </div>
    </div>
  );
}

function PromptBar() {
  return (
    <div>
      <div className="mt-4 flex items-center pl-[22px]">
        <svg viewBox="0 0 20 20" className="size-5" fill="none" stroke="#e3e3e3" strokeWidth="2">
          <path d="M11.500 1.800H3Q1.800 1.800 1.800 3V17Q1.800 18.200 3 18.200H17Q18.200 18.200 18.200 17V9" />
          <path d="M16.500 0V7M13 3.500H20" />
          <path d="M4 15.500L7 11.500L9 14L12 10L16 15.500Z" fill="#e3e3e3" stroke="none" />
        </svg>
        <div className="ml-[14px] flex h-[58px] w-[1084px] items-center rounded-full border border-[#b9bbbe] bg-[#131314] pl-5 tracking-[0.25px] text-[#bdc1c6]">
          Enter a prompt here
        </div>
        <svg viewBox="0 0 22 22" className="ml-[12px] size-[22px]" fill="none" stroke="#6a6c70" strokeWidth="2">
          <path d="M3 6.500V20L18 13.200ZM3 13.200H9" />
          <path d="M18.500 0.500Q19 3.500 22 4.200Q19 5 18.500 8Q18 5 15 4.200Q18 3.500 18.500 0.500Z" fill="#6a6c70" stroke="none" />
        </svg>
      </div>
      <div className="mt-[12px] text-center text-xs leading-[18px] tracking-[0.3px] text-[#bdc1c6]">
        Bard may display inaccurate or offensive information that doesn’t represent Google’s views.{" "}
        <span className="border-b border-[#e3e3e3] font-bold text-[#c9cbce]">Bard Privacy Notice</span>
      </div>
    </div>
  );
}

function Conversation() {
  return (
    <div className="relative h-[1164px] w-[2183px] overflow-hidden rounded-[24px] bg-[#222327] text-[#d5d7da]">
      <div className="mx-auto flex w-[1200px] flex-col">
        <div className="flex h-[109px] items-start pt-4 pl-3">
          <Avatar />
          <div className="ml-4 pt-[5px] leading-6">
            <p className="tracking-[0.17px]">What should a reading group on category theory for masters students in Computational Linguistics look like?</p>
            <p className="mt-6 tracking-[0.115px]">Try to suggest some possible scenarios and books to use in process or discuss the matters of organization</p>
          </div>
          <MdOutlineEdit className="mt-1 mr-[12px] ml-auto size-6 text-[#e3e3e3]" />
        </div>
        <Answer />
        <PromptBar />
      </div>
      <div className="absolute top-[11px] right-0 h-[673px] w-[3px] rounded-full bg-[#dadce0]" />
    </div>
  );
}

/* ---------- desktop panel ---------- */

function Telegram() {
  return (
    <div className="relative">
      <svg viewBox="0 0 28 28" className="size-7">
        <circle cx="14" cy="14" r="13.500" fill="#1d93ea" />
        <path d="M5 14L18 9V20L14 17.500L12 20L11 16.500Z" fill="#fff" />
      </svg>
      <span className="absolute -top-[2px] left-[10px] flex h-[14px] w-[26px] items-center justify-center rounded-full border border-[#3daee9] bg-[#2b4e62] text-[9.500px] leading-none whitespace-nowrap text-white">
        9,999
      </span>
    </div>
  );
}

function Launchers() {
  return (
    <div className="flex h-full items-center">
      <svg viewBox="0 0 26 26" className="ml-[10px] size-[26px]" fill="#fff">
        <path d="M13 2L16 0.500L24.500 8.500L16 16.500L13 15L18 8.500Z" />
        <circle cx="6.500" cy="2.800" r="1.800" />
        <circle cx="3" cy="12.500" r="2.700" />
        <circle cx="9.500" cy="22" r="3.200" />
      </svg>
      <svg viewBox="0 0 28 28" className="ml-[20px] size-7">
        <rect width="28" height="28" rx="1" fill="#222426" />
        <rect width="28" height="10" rx="1" fill="#3c3e40" />
        <path d="M3 10H20M3 18H9" stroke="#3daee9" strokeWidth="2" />
        <path d="M20 10H25M10 18H25" stroke="#5c5e60" strokeWidth="2" />
        <circle cx="20" cy="10" r="2.200" fill="#fff" />
        <circle cx="10" cy="18" r="2.200" fill="#fff" />
      </svg>
      <svg viewBox="0 0 24 28" className="ml-[26px] h-7 w-6">
        <path d="M7 7Q7 1 12 1T17 7" fill="none" stroke="#2a86b0" strokeWidth="1.500" />
        <path fill="#1d99f3" d="M0 5H24V28H0Z" />
        <path fill="#20b2f6" d="M0 5H24V14L0 18Z" />
        <path d="M12.500 13L16 16.500L12.500 20" fill="none" stroke="#fff" strokeWidth="2" />
        <circle cx="9" cy="14" r="0.900" fill="#fff" />
        <circle cx="8" cy="18" r="1.100" fill="#fff" />
        <circle cx="11" cy="22.500" r="1.200" fill="#fff" />
      </svg>
      <svg viewBox="0 0 30 28" className="ml-[25px] h-7 w-[30px]">
        <path fill="#2a7099" d="M0 0H13L15 3H30V14H0Z" />
        <rect x="1" y="5" width="28" height="6" fill="#fff" />
        <path fill="#4aaede" d="M0 10H10L13 8H30V28H0Z" />
        <path fill="#3a94c6" d="M13 12L30 27V28H5V20Z" opacity="0.5" />
      </svg>
      <div className="relative ml-3 flex h-11 w-[50px] items-center justify-center border-t-[3px] border-[#7e8083] bg-[#505256]">
        <Firefox className="-mt-1 size-[31px]" />
        <svg viewBox="0 0 10 10" className="absolute bottom-px left-5 size-[10px]">
          <circle cx="5" cy="5" r="5" fill="#27ae60" />
          <path d="M5 2V8M2 5H8" stroke="#fff" strokeWidth="1.200" />
        </svg>
      </div>
      <div className="ml-0.5 h-11 w-[50px] bg-[#3b3e42]" />
      <div className="ml-0.5 flex h-11 w-[50px] items-center justify-center bg-[#3b3e42]">
        <Telegram />
      </div>
      <div className="ml-0.5 flex h-11 w-[50px] items-center justify-center border-t-[3px] border-[#3daee9] bg-[#31637f]">
        <svg viewBox="0 0 32 28" className="-mt-0.5 h-7 w-8">
          <rect width="32" height="24" rx="1" fill="#26282a" />
          <path fill="#3fc5b4" d="M1.500 1.500H30.500V5L16 12L1.500 20Z" />
          <path fill="#4b5a5e" d="M1.500 22V14L16 10L24 22Z" />
          <path fill="#b5468e" d="M30.500 3V22H20L14 11Z" />
          <path d="M3 6V3H6M26 3H29V6M29 18V20.500H26M6 20.500H3V18M11 9H20.500V16.500H11Z" fill="none" stroke="#fff" strokeWidth="1.200" />
          <circle cx="16" cy="12.800" r="2.200" fill="none" stroke="#fff" strokeWidth="1.200" />
          <path fill="#c8cacb" d="M13 24H19V26H24V27.500H8V26H13Z" />
        </svg>
      </div>
    </div>
  );
}

function TrayIcon({ children }: { children: React.ReactNode }) {
  return (
    <svg viewBox="0 0 20 20" className="mr-[10px] size-5 shrink-0" fill="none" stroke="#fcfcfc" strokeWidth="1.200">
      {children}
    </svg>
  );
}

const Volume = ({ faint }: { faint?: boolean }) => (
  <TrayIcon>
    <path d="M2 6H4V14H2Z M5 6L10 1.500V18.500L5 14Z" fill="#fff" stroke="none" />
    <path d="M12 6.500Q14.500 10 12 13.500" />
    <path d="M14 3.500Q19 10 14 16.500" stroke={faint ? "#6b6d70" : "#b9babb"} />
  </TrayIcon>
);

function Tray() {
  return (
    <div className="flex h-full items-center text-[#fcfcfc]">
      <TrayIcon>
        <path d="M4 14.500H16L14.500 12.500V8Q14.500 4 10 4T5.500 8V12.500ZM10 2V4" />
        <path d="M8 17H12L10 19Z" fill="#fff" />
        <path d="M4.500 3L3 8M2.500 2L1.500 7M15.500 3L17 8M17.500 2L18.500 7" strokeWidth="0.900" />
      </TrayIcon>
      <TrayIcon>
        <circle cx="10" cy="6" r="3.800" />
        <path d="M2.500 18.500Q3 12 10 12T17.500 18.500" />
      </TrayIcon>
      <TrayIcon>
        <circle cx="10" cy="11" r="7.500" strokeWidth="2" />
        <path d="M3.500 19.500L10.500 0L16 19M1 13L19 9.500" strokeWidth="1.900" />
      </TrayIcon>
      <TrayIcon>
        <rect x="0.700" y="0.700" width="18.600" height="18.600" stroke="#9a9c9e" strokeDasharray="1 1" />
        <path d="M6.500 4V8" stroke="#ff9f1a" />
        <path d="M4 9H9M6.500 9V17M16 11.500H12.500V16.500H16V14.500" stroke="#ff4d0a" strokeWidth="1.500" />
        <path d="M16 3.500H12.500V8.500H16" stroke="#ff9f1a" strokeWidth="1.500" />
      </TrayIcon>
      <TrayIcon>
        <path d="M2 11L17 3L13 16L8.500 13.500L6.500 17V12.500ZM17 3L6.500 12.500M17 3L8.500 13.500" />
        <circle cx="15" cy="15" r="3.200" fill="#3daee9" stroke="none" />
      </TrayIcon>
      <TrayIcon>
        <circle cx="10" cy="10" r="7.800" />
        <path d="M10 4.500L14 9H12V14H8V9H6Z" fill="#fff" stroke="none" />
        <circle cx="15" cy="15" r="3.200" fill="#3daee9" stroke="none" />
      </TrayIcon>
      <TrayIcon>
        <rect x="0.600" y="3" width="18.800" height="14" stroke="#6e7073" />
        <path d="M0 3.500H20" strokeWidth="1.800" />
        <path d="M5.500 7.500L8.500 10L5.500 12.500M10 13H14" />
      </TrayIcon>
      <TrayIcon>
        <g stroke="#a9abad">
          <circle cx="9" cy="6" r="3.500" />
          <path d="M2 18Q2.500 11.500 9 11.500Q11 11.500 12 12" />
          <circle cx="14.500" cy="15" r="3" />
          <path d="M13 15H16" />
        </g>
      </TrayIcon>
      <TrayIcon>
        <path d="M3.500 4H16.500V17.500H3.500Z" strokeWidth="1.500" />
        <path d="M6 2H14V6H6Z" fill="#fff" stroke="none" />
        <path d="M6 9H14M6 12H11M6 15H9" />
      </TrayIcon>
      <TrayIcon>
        <circle cx="10" cy="10" r="7.700" />
        <path d="M8 7V13M12 7V13" strokeWidth="2" />
      </TrayIcon>
      <Volume />
      <span className="mr-[8px] w-[22px] text-center text-[20px] leading-none">us</span>
      <TrayIcon>
        <path d="M2 2.500H6V7H2ZM4 7V16M8 2.500H17.500V14H6.500" strokeWidth="1.500" />
        <path d="M7 14.500H17V16H14V18H9V16H7Z" fill="#fff" stroke="none" />
      </TrayIcon>
      <Volume faint />
      <svg viewBox="0 0 14 8" className="mr-[14px] ml-px h-2 w-[14px]" fill="none" stroke="#fcfcfc" strokeWidth="1.200">
        <path d="M1 7L7 1L13 7" />
      </svg>
      <div className="w-[64px] text-center">
        <div className="text-[16px] leading-[17px] whitespace-nowrap">2:21 PM</div>
        <div className="text-[12.670px] leading-[14px]">10/24/23</div>
      </div>
      <svg viewBox="0 0 16 16" className="mr-[17px] ml-[26px] size-4" fill="none" stroke="#fcfcfc" strokeWidth="1.200">
        <path d="M0.600 0.600H15.400V15.400H0.600ZM2 12.800H14" />
      </svg>
    </div>
  );
}

export default function App() {
  return (
    <div className="flex h-[1447px] w-[2563px] overflow-hidden bg-white pt-[3px] font-['Noto_Sans',sans-serif]">
      <div className="-mt-[3px] h-[1450px] w-1 shrink-0 bg-linear-to-b from-[#22272a] from-80% via-[#3b3560] via-85% to-[#1f2f5c]" />
      <div className="flex min-w-0 flex-1 flex-col">
        <TitleBar />
        <TabBar />
        <div className="h-[71px] border-b border-[#63676b] bg-[#4a4c51]">
          <NavBar />
          <BookmarksBar />
        </div>
        <div className="h-[1253px] bg-black font-['Roboto',sans-serif]">
          <BardHeader />
          <div className="mt-px flex h-[1164px]">
            <Sidebar />
            <Conversation />
          </div>
        </div>
        <div className="flex h-11 items-center justify-between bg-[#2a2d31]">
          <Launchers />
          <Tray />
        </div>
      </div>
    </div>
  );
}
